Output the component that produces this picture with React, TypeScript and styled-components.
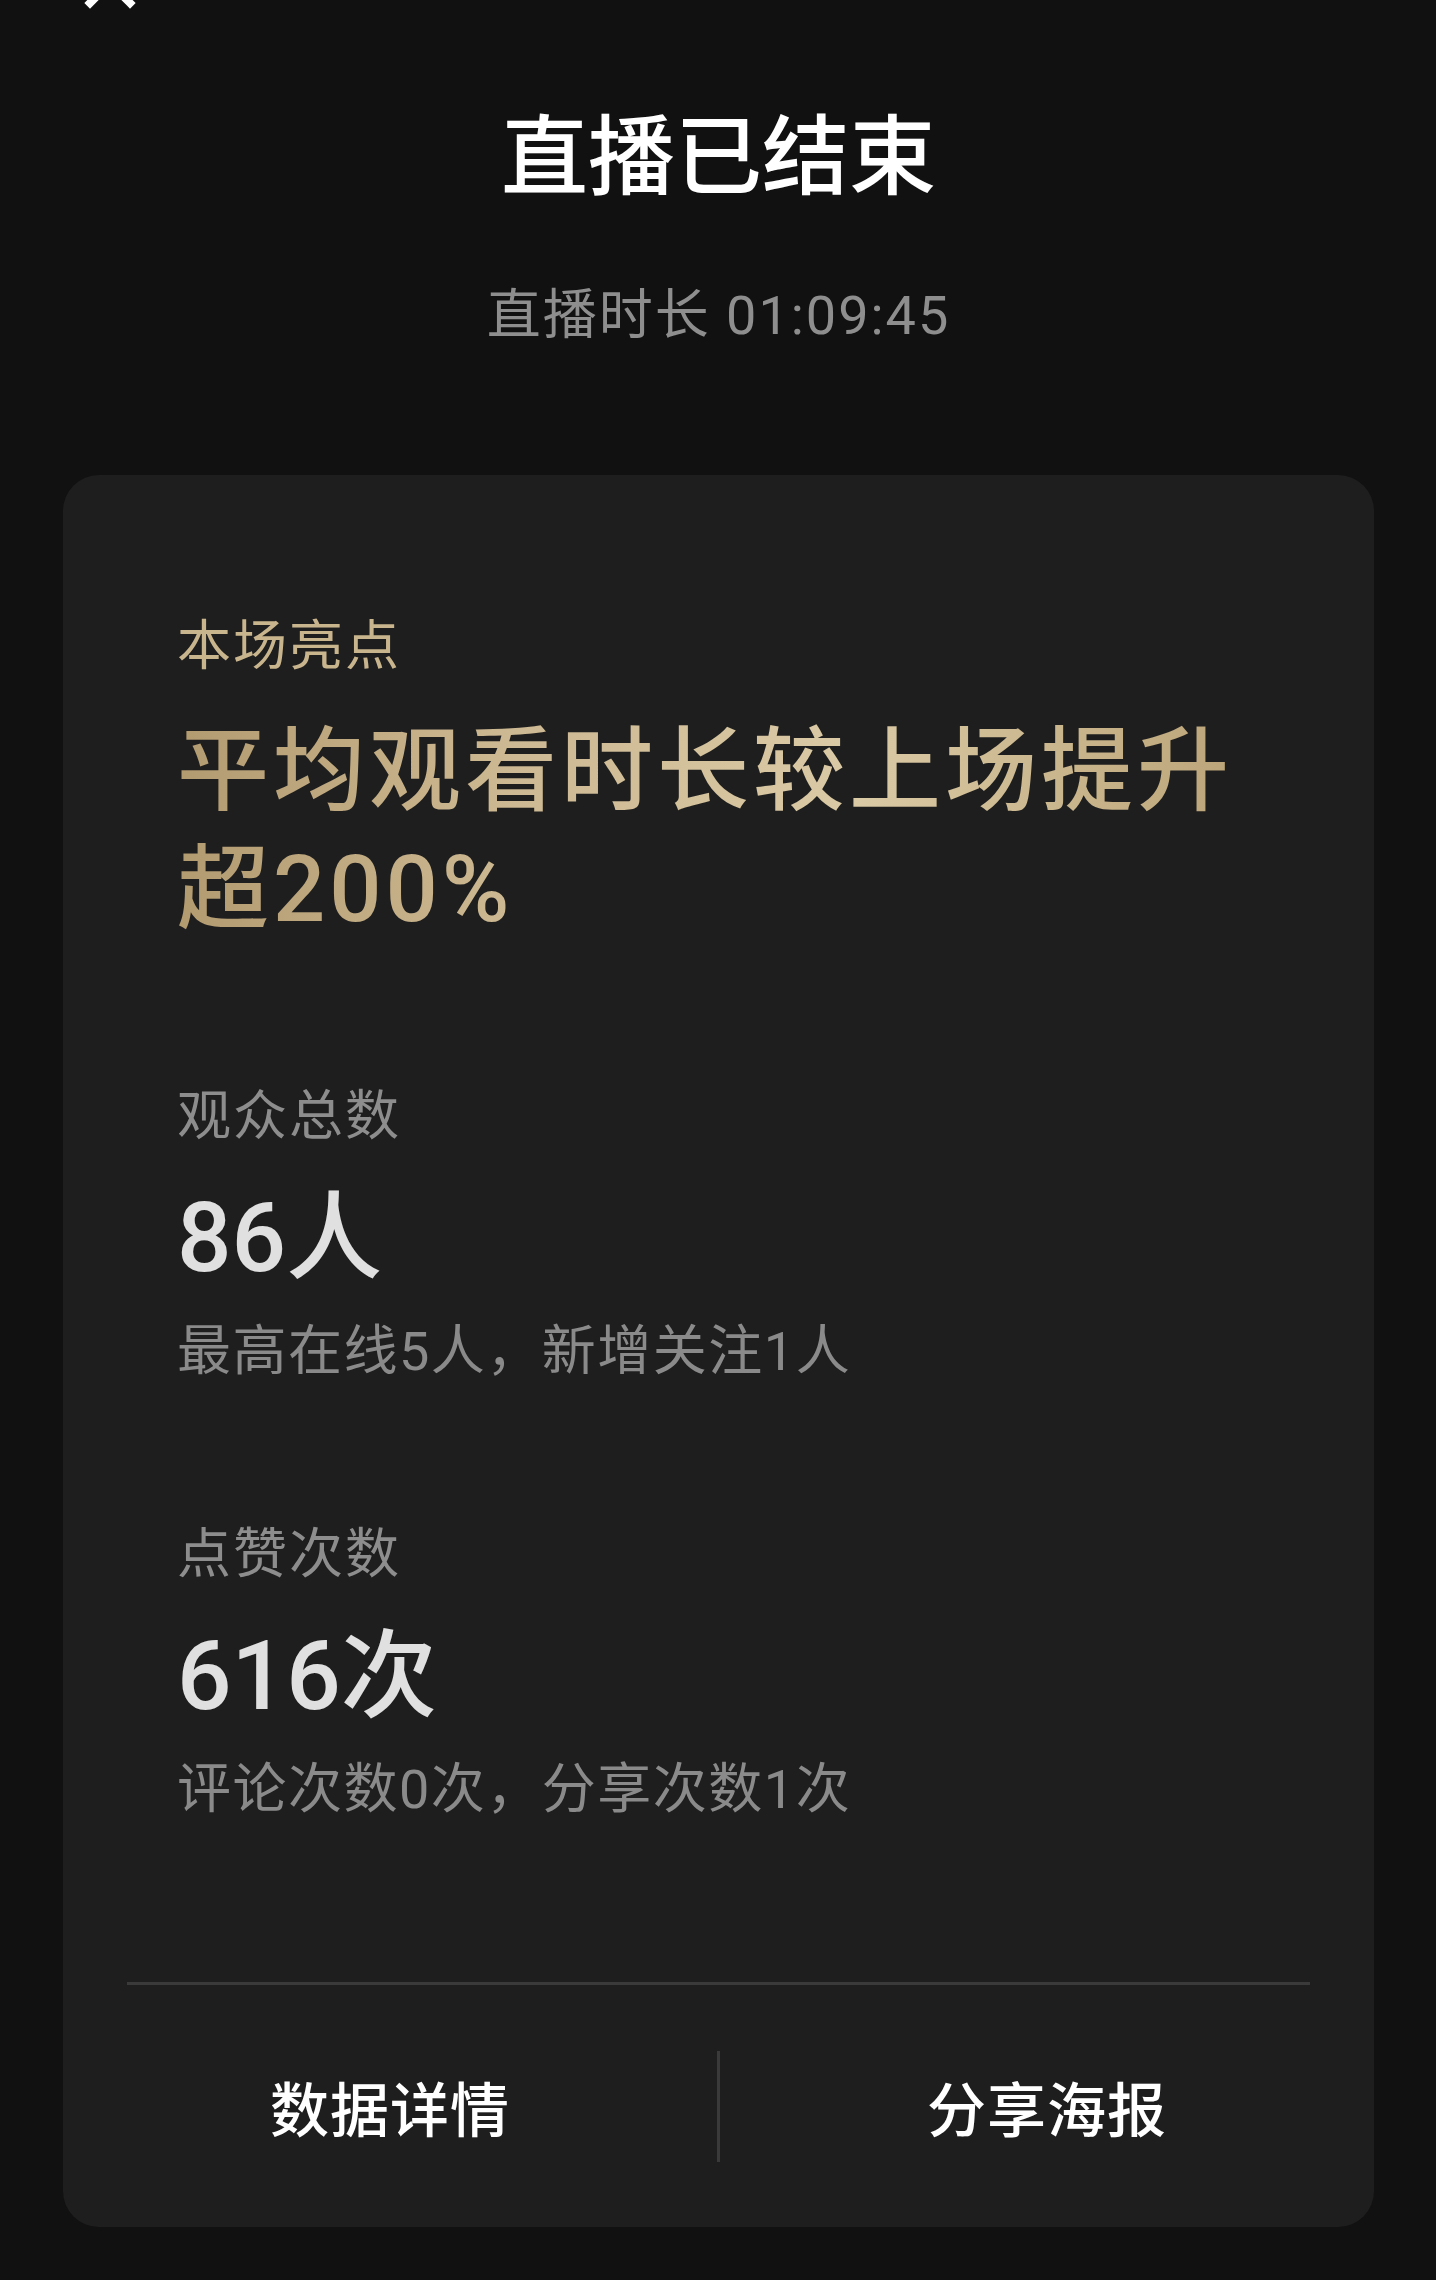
import styled, { createGlobalStyle } from "styled-components";

const fontStack = `Roboto, "Noto Sans CJK SC", "Noto Sans", sans-serif`;

const GlobalStyle = createGlobalStyle`
  html, body {
    margin: 0;
    padding: 0;
    background: #111111;
  }

  body {
    font-family: ${fontStack};
    -webkit-font-smoothing: antialiased;
  }
`;

const Page = styled.div`
  position: relative;
  width: 1436px;
  min-height: 2280px;
  background: #111111;
  overflow: hidden;
  padding: 108px 62px 53px 63px;
  box-sizing: border-box;
`;

const CloseButton = styled.button`
  position: absolute;
  left: 80px;
  top: -47px;
  width: 60px;
  height: 60px;
  padding: 0;
  border: none;
  background: none;
  cursor: pointer;
`;

const Header = styled.header`
  display: flex;
  flex-direction: column;
  align-items: center;
`;

const Title = styled.h1`
  margin: 0;
  font-size: 87px;
  line-height: 100px;
  font-weight: 500;
  color: #ffffff;
`;

const Duration = styled.p`
  margin: 78px 0 0;
  font-size: 54px;
  line-height: 60px;
  letter-spacing: 2px;
  color: #8e8e8e;
`;

const Card = styled.section`
  margin-top: 129px;
  background: #1e1e1e;
  border-radius: 36px;
  overflow: hidden;
`;

const Body = styled.div`
  padding: 142px 64px 0 114px;
`;

const Label = styled.div<{ $gold?: boolean }>`
  font-size: 54px;
  line-height: 60px;
  letter-spacing: 2px;
  color: ${(p) => (p.$gold ? "#c8b48d" : "#8d8d8d")};
`;

const Headline = styled.div`
  margin-top: 36px;
  font-size: 92px;
  line-height: 118px;
  font-weight: 500;
  letter-spacing: 4px;
  background: linear-gradient(90deg, #b39b70 0%, #cdb993 30%, #dacaa5 60%, #b69d70 100%);
  -webkit-background-clip: text;
  background-clip: text;
  color: transparent;
`;

const Stat = styled.div`
  margin-top: 138px;

  & + & {
    margin-top: 143px;
  }
`;

const Value = styled.div`
  margin-top: 36px;
  font-size: 96px;
  line-height: 110px;
  font-weight: 500;
  color: #e0e0e0;
`;

const Sub = styled.div`
  margin-top: 29px;
  font-size: 54px;
  line-height: 60px;
  letter-spacing: 1.5px;
  color: #8a8a8a;
`;

const Divider = styled.hr`
  margin: 162px 64px 0;
  height: 3px;
  border: none;
  background: #3a3a3a;
`;

const Actions = styled.div`
  display: flex;
  align-items: center;
  height: 242px;
`;

const ActionButton = styled.button`
  flex: 1;
  height: 100%;
  border: none;
  background: none;
  padding: 0;
  font-family: ${fontStack};
  font-size: 59px;
  font-weight: 500;
  letter-spacing: 1px;
  color: #ffffff;
  cursor: pointer;
`;

const VDivider = styled.span`
  width: 3px;
  height: 111px;
  background: #3a3a3a;
`;

const stats = [
  { label: "观众总数", value: "86人", sub: "最高在线5人，新增关注1人" },
  { label: "点赞次数", value: "616次", sub: "评论次数0次，分享次数1次" },
];

const App = () => {
  return (
    <>
      <GlobalStyle />
      <Page>
        <CloseButton aria-label="关闭">
          <svg width="60" height="60" viewBox="0 0 60 60">
            <path
              d="M10 10 L50 50 M50 10 L10 50"
              stroke="#ffffff"
              strokeWidth="8"
              strokeLinecap="square"
            />
          </svg>
        </CloseButton>

        <Header>
          <Title>直播已结束</Title>
          <Duration>直播时长 01:09:45</Duration>
        </Header>

        <Card>
          <Body>
            <Label $gold>本场亮点</Label>
            <Headline>
              平均观看时长较上场提升
              <br />
              超200%
            </Headline>

            {stats.map((s) => (
              <Stat key={s.label}>
                <Label>{s.label}</Label>
                <Value>{s.value}</Value>
                <Sub>{s.sub}</Sub>
              </Stat>
            ))}
          </Body>

          <Divider />
          <Actions>
            <ActionButton>数据详情</ActionButton>
            <VDivider />
            <ActionButton>分享海报</ActionButton>
          </Actions>
        </Card>
      </Page>
    </>
  );
};

export default App;
